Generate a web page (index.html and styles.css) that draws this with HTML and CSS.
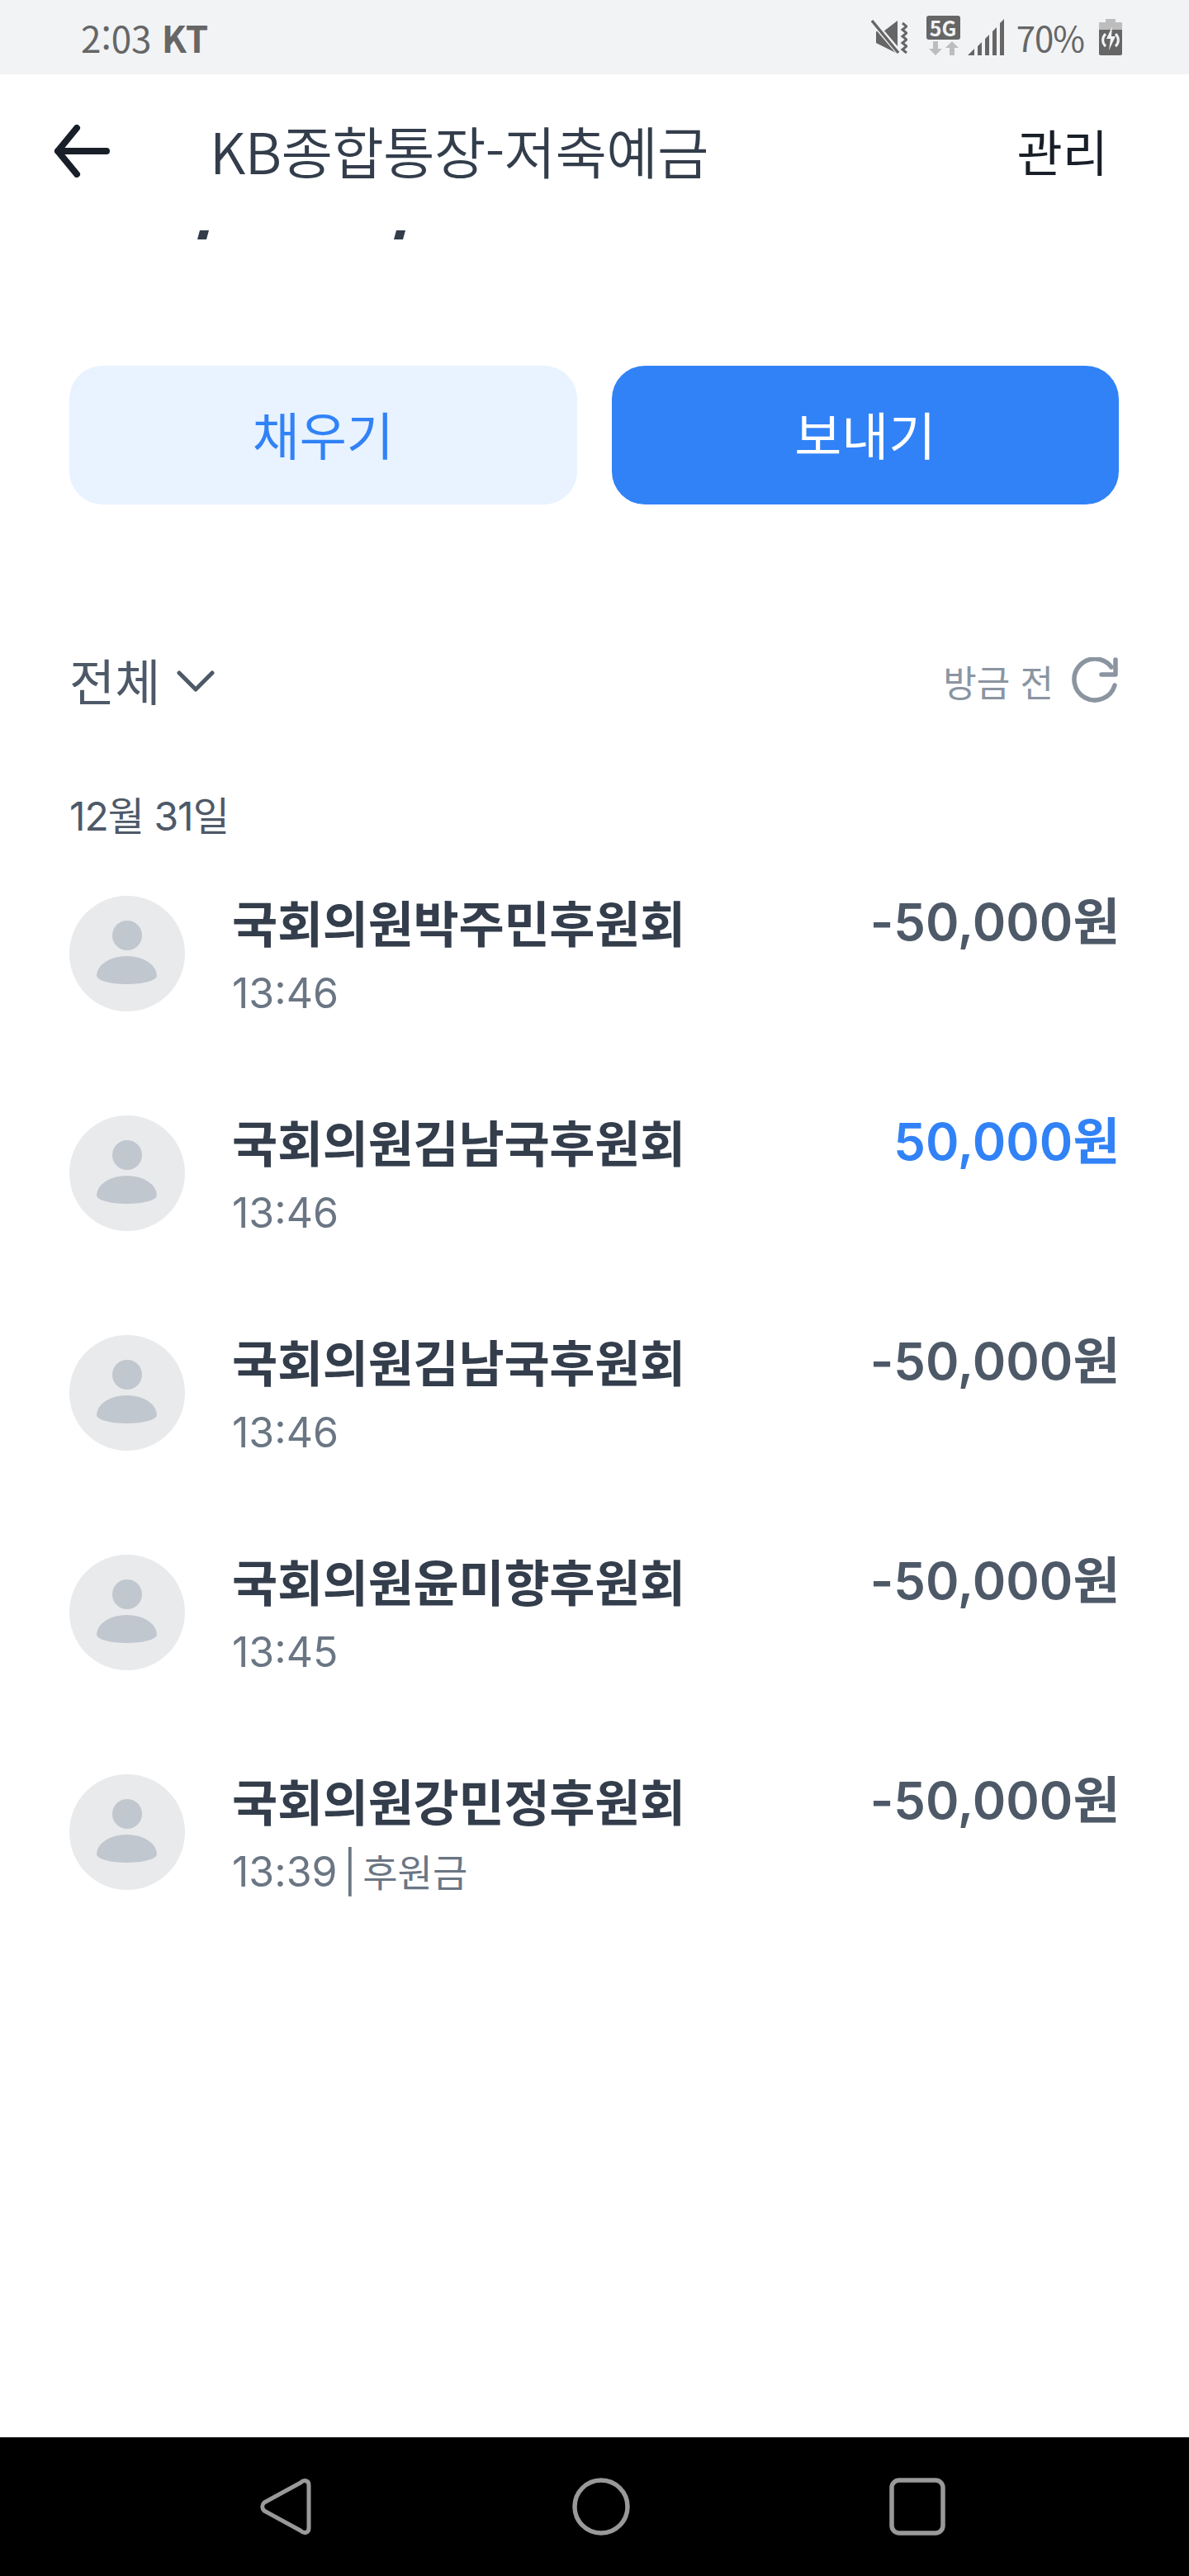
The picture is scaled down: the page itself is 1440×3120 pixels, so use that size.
FILE: index.html
```html
<!DOCTYPE html>
<html lang="ko">
<head>
  <meta charset="UTF-8">
  <title>KB종합통장-저축예금</title>
  <link rel="stylesheet" href="styles.css">
</head>
<body>
  <div class="screen">
    <div class="status-bar">
      <div class="status-left">2:03 <b>KT</b></div>
      <div class="status-right">
        <svg class="ic-mute" width="44" height="44" viewBox="0 0 44 44">
          <path d="M6 15h9l17-13v40L6 29z" fill="#666"/>
          <path d="M1 2l34 40" stroke="#f2f3f5" stroke-width="7"/>
          <path d="M1 2l32 39" stroke="#666" stroke-width="3.4"/>
          <path d="M38 5l5 4-5 4 5 4-5 4 5 4-5 4 5 4-5 4 5 4" fill="none" stroke="#666" stroke-width="3"/>
        </svg>
        <div class="ic-net">
          <span class="net-badge">5G</span>
          <svg width="42" height="19" viewBox="0 0 42 19">
            <path d="M8 2h6v9h5l-8 8-8-8h5zM28 19h6v-9h5l-8-8-8 8h5z" fill="#bdbdbd"/>
          </svg>
        </div>
        <svg class="ic-signal" width="45" height="45" viewBox="0 0 45 45">
          <path d="M0 44l8-8v8zM12 44V33l5-5v16zM21 44V24l5-5v25zM30 44V15l5-5v34zM39 44V5l5-5v44z" fill="#666"/>
        </svg>
        <span class="status-pct">70%</span>
        <svg class="ic-batt" width="28" height="44" viewBox="0 0 28 44">
          <path d="M8 0h12v4h8v12H0V4h8z" fill="#bdbdbd"/>
          <path d="M0 13h28v29a2 2 0 0 1-2 2H2a2 2 0 0 1-2-2z" fill="#666"/>
          <path d="M16 9l-7 15h5l-2 14 8-17h-5z" fill="#f2f3f5"/>
          <path d="M8 18a10 10 0 0 0 0 15M20 18a10 10 0 0 1 0 15" fill="none" stroke="#f2f3f5" stroke-width="3"/>
        </svg>
      </div>
    </div>

    <div class="top-nav">
      <svg class="back-arrow" width="68" height="64" viewBox="0 0 68 64">
        <path d="M64 32H5M5 32L28 4M5 32l23 28" fill="none" stroke="#191f28" stroke-width="8" stroke-linecap="round" stroke-linejoin="round"/>
      </svg>
      <div class="nav-title">KB종합통장-저축예금</div>
      <div class="nav-action">관리</div>
    </div>

    <div class="balance-clip">
      <span class="comma"></span>
      <span class="comma"></span>
    </div>

    <div class="btn-row">
      <div class="btn btn-light">채우기</div>
      <div class="btn btn-primary">보내기</div>
    </div>

    <div class="filter-row">
      <div class="filter">
        <span>전체</span>
        <svg width="46" height="28" viewBox="0 0 46 28">
          <path d="M3 4l20 20L43 4" fill="none" stroke="#4e5968" stroke-width="5" stroke-linecap="round" stroke-linejoin="round"/>
        </svg>
      </div>
      <div class="refresh">
        <span>방금 전</span>
        <svg width="58" height="58" viewBox="0 0 58 58">
          <path d="M52 34A25 25 0 1 1 48 12" fill="none" stroke="#8b95a1" stroke-width="5.5" stroke-linecap="round"/>
          <path d="M53 3v18H36" fill="none" stroke="#8b95a1" stroke-width="5.5" stroke-linecap="round" stroke-linejoin="round"/>
        </svg>
      </div>
    </div>

    <div class="date-label">12월 31일</div>

    <ul class="tx-list">
      <li class="tx">
        <div class="avatar"><span class="avatar-head"></span><span class="avatar-body"></span></div>
        <div class="tx-info">
          <div class="tx-name">국회의원박주민후원회</div>
          <div class="tx-time">13:46</div>
        </div>
        <div class="tx-amount">-50,000원</div>
      </li>
      <li class="tx">
        <div class="avatar"><span class="avatar-head"></span><span class="avatar-body"></span></div>
        <div class="tx-info">
          <div class="tx-name">국회의원김남국후원회</div>
          <div class="tx-time">13:46</div>
        </div>
        <div class="tx-amount tx-in">50,000원</div>
      </li>
      <li class="tx">
        <div class="avatar"><span class="avatar-head"></span><span class="avatar-body"></span></div>
        <div class="tx-info">
          <div class="tx-name">국회의원김남국후원회</div>
          <div class="tx-time">13:46</div>
        </div>
        <div class="tx-amount">-50,000원</div>
      </li>
      <li class="tx">
        <div class="avatar"><span class="avatar-head"></span><span class="avatar-body"></span></div>
        <div class="tx-info">
          <div class="tx-name">국회의원윤미향후원회</div>
          <div class="tx-time">13:45</div>
        </div>
        <div class="tx-amount">-50,000원</div>
      </li>
      <li class="tx">
        <div class="avatar"><span class="avatar-head"></span><span class="avatar-body"></span></div>
        <div class="tx-info">
          <div class="tx-name">국회의원강민정후원회</div>
          <div class="tx-time tx-memo">13:39 | <span>후원금</span></div>
        </div>
        <div class="tx-amount">-50,000원</div>
      </li>
    </ul>

    <div class="android-nav">
      <svg width="64" height="70" viewBox="0 0 64 70">
        <path d="M50 6c4-4 10-3 10 3v52c0 6-6 7-10 3L6 40c-3-3-3-7 0-10z" fill="none" stroke="#999" stroke-width="5" stroke-linejoin="round"/>
      </svg>
      <svg width="70" height="70" viewBox="0 0 70 70">
        <circle cx="35" cy="35" r="32" fill="none" stroke="#999" stroke-width="5.5"/>
      </svg>
      <svg width="68" height="70" viewBox="0 0 68 70">
        <rect x="3" y="3" width="62" height="64" rx="9" fill="none" stroke="#999" stroke-width="5.5"/>
      </svg>
    </div>
  </div>
</body>
</html>
```

FILE: styles.css
```css
html, body {
  margin: 0;
  padding: 0;
  background-color: #fff;
  font-family: Inter, "Noto Sans CJK KR", sans-serif;
}

.screen {
  width: 1440px;
  height: 3120px;
  display: flex;
  flex-direction: column;
  overflow: hidden;
}

/* status bar */
.status-bar {
  height: 90px;
  flex: none;
  box-sizing: border-box;
  padding: 0 81px 0 98px;
  background-color: #f2f3f5;
  display: flex;
  justify-content: space-between;
  align-items: center;
  color: #666;
  font-family: "Noto Sans CJK KR", sans-serif;
  font-size: 44px;
  line-height: 86px;
}

.status-left b {
  font-weight: 700;
}

.status-right {
  display: flex;
  align-items: center;
}

.ic-mute { margin-right: 23px; }
.ic-signal { margin-right: 14px; }

.ic-net {
  width: 42px;
  margin-right: 8px;
  margin-top: -4px;
  display: flex;
  flex-direction: column;
}

.net-badge {
  width: 41px;
  height: 29px;
  border-radius: 3px;
  background-color: #666;
  color: #f2f3f5;
  font-size: 25px;
  font-weight: 700;
  line-height: 28px;
  text-align: center;
}

.status-pct {
  margin-right: 18px;
  font-size: 42px;
  letter-spacing: -1px;
}

/* header */
.top-nav {
  height: 186px;
  flex: none;
  box-sizing: border-box;
  padding: 0 98px 0 65px;
  display: flex;
  align-items: center;
}

.back-arrow {
  margin-right: 121px;
  flex: none;
}

.nav-title {
  flex: 1;
  font-family: "Noto Sans CJK KR", sans-serif;
  font-size: 68px;
  letter-spacing: -0.7px;
  line-height: 80px;
  margin-bottom: 2px;
  font-weight: 350;
  color: #333d4b;
}

.nav-action {
  font-family: "Noto Sans CJK KR", sans-serif;
  font-size: 60px;
  line-height: 80px;
  margin-bottom: 2px;
  color: #191f28;
}

.balance-clip {
  height: 14px;
  flex: none;
  display: flex;
  gap: 224px;
  padding-left: 239px;
  margin-bottom: 153px;
}

.comma {
  width: 14px;
  height: 11px;
  margin-top: 3px;
  background-color: #333d4b;
  clip-path: polygon(3px 0, 100% 0, 11px 100%, 0 100%);
}

/* buttons */
.btn-row {
  flex: none;
  display: flex;
  gap: 42px;
  padding: 0 85px 0 84px;
}

.btn {
  flex: 1;
  height: 168px;
  box-sizing: border-box;
  padding-bottom: 4px;
  border-radius: 40px;
  display: flex;
  align-items: center;
  justify-content: center;
  font-family: "Noto Sans CJK KR", sans-serif;
  font-size: 62px;
}

.btn-light {
  background-color: #e8f3ff;
  color: #3182f6;
}

.btn-primary {
  background-color: #3182f6;
  color: #fff;
}

/* filter */
.filter-row {
  flex: none;
  height: 60px;
  margin-top: 184px;
  padding: 0 84px;
  display: flex;
  justify-content: space-between;
  align-items: center;
  font-family: "Noto Sans CJK KR", sans-serif;
}

.filter {
  display: flex;
  align-items: center;
  gap: 20px;
  font-size: 60px;
  line-height: 60px;
  color: #4e5968;
}

.filter span {
  margin-top: -4px;
}

.refresh {
  display: flex;
  align-items: center;
  gap: 22px;
  font-size: 44px;
  color: #8b95a1;
}

.date-label {
  flex: none;
  margin-top: 104px;
  padding-left: 84px;
  font-size: 48px;
  line-height: 60px;
  letter-spacing: -1px;
  color: #4e5968;
}

/* list */
.tx-list {
  flex: 1;
  list-style: none;
  margin: 66px 0 0;
  padding: 0 84px;
  display: flex;
  flex-direction: column;
  gap: 126px;
}

.tx {
  height: 140px;
  display: flex;
  align-items: flex-start;
}

.avatar {
  position: relative;
  width: 140px;
  height: 140px;
  flex: none;
  margin-right: 57px;
  border-radius: 50%;
  background-color: #e9eaec;
}

.avatar-head {
  position: absolute;
  left: 52px;
  top: 30px;
  width: 36px;
  height: 36px;
  border-radius: 50%;
  background-color: #c1c7cf;
}

.avatar-body {
  position: absolute;
  left: 33px;
  top: 73px;
  width: 73px;
  height: 34px;
  border-radius: 50% 50% 50% 50% / 70% 70% 30% 30%;
  background-color: #c1c7cf;
}

.tx-info {
  flex: 1;
}

.tx-name {
  font-size: 60px;
  line-height: 70px;
  font-weight: 600;
  letter-spacing: -0.3px;
  color: #333d4b;
}

.tx-time {
  margin-top: 20px;
  font-size: 50px;
  line-height: 56px;
  color: #6b7684;
}

.tx-memo {
  word-spacing: -7px;
}

.tx-memo span {
  font-size: 46px;
}

.tx-amount {
  margin-top: -3px;
  font-size: 61.5px;
  line-height: 70px;
  font-weight: 600;
  color: #4e5968;
}

.tx-in {
  color: #3182f6;
}

/* android nav */
.android-nav {
  height: 168px;
  flex: none;
  background-color: #000;
  display: flex;
  align-items: center;
  justify-content: space-between;
  box-sizing: border-box;
  padding: 0 295px 0 314px;
}
```
